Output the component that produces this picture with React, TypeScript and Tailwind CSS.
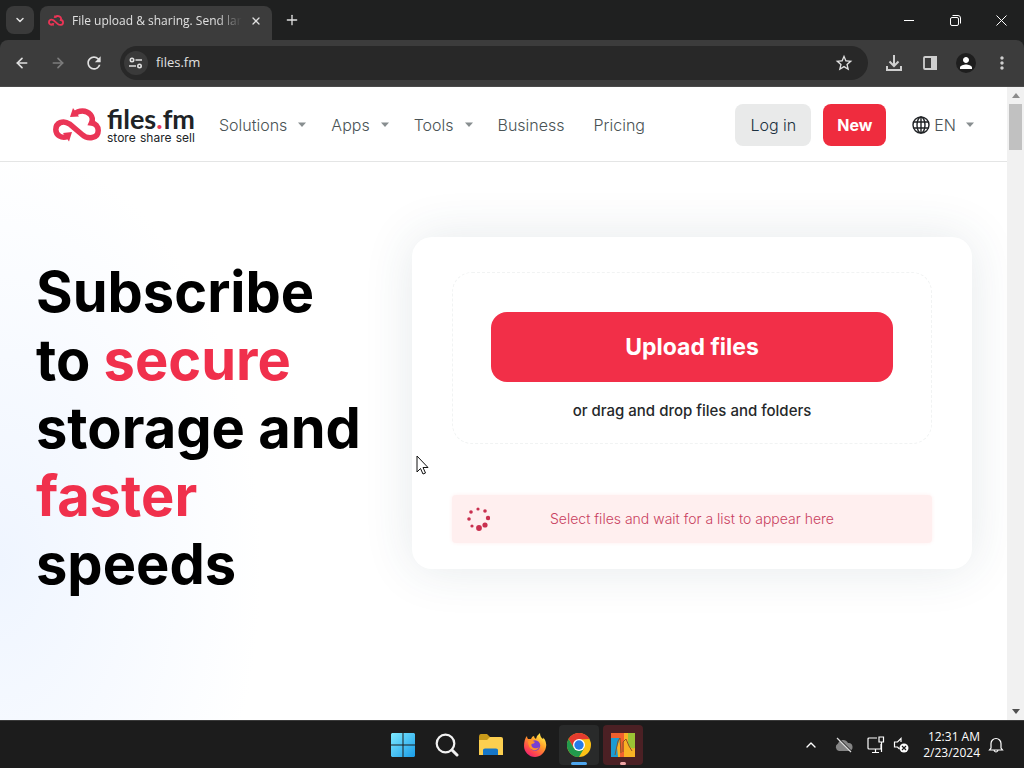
import { useState } from "react";
import { ArrowLeft, ArrowRight, ChevronDown, ChevronUp, Plus, X } from "lucide-react";
import { MdRefresh, MdStarBorder, MdPerson, MdMoreVert } from "react-icons/md";

const navLinks = [
    { name: "Solutions", menu: true },
    { name: "Apps", menu: true },
    { name: "Tools", menu: true },
    { name: "Business", menu: false },
    { name: "Pricing", menu: false },
];

const spinnerDots = [
    { x: 12, y: 2, r: 1.6 },
    { x: 19, y: 4, r: 1.8 },
    { x: 22, y: 11, r: 2.2 },
    { x: 19, y: 18, r: 2.6 },
    { x: 13, y: 21, r: 2.9 },
    { x: 6, y: 19, r: 1.6 },
    { x: 3, y: 12, r: 1.8 },
    { x: 5, y: 5, r: 1.8 },
];

function CloudLogo({ className }: { className: string }) {
    return (
        <svg viewBox="0 0 48 34" className={className} fill="none" aria-hidden="true">
            <path
                d="M14.500 28.500C8.500 31 2.800 27 2.800 21.500C2.800 15 10 11.500 16.500 16L29 26.500C34.500 31.500 45.200 31 45.200 22.500C45.200 18.500 42.500 15.500 38.500 15C41.500 8.500 35.500 3 29.500 3C26 3 23.500 4 21.500 6"
                stroke="#ea3556"
                strokeWidth="5.500"
            />
            <path d="M20 0L17 9L26 8.500Z" fill="#ea3556" />
            <path d="M10 25L19 24L16 33.500Z" fill="#ea3556" />
        </svg>
    );
}

function Caret() {
    return (
        <svg viewBox="0 0 8 5" className="w-2" fill="#888e90" aria-hidden="true">
            <path d="M0 .5H8L4 5Z" />
        </svg>
    );
}

function BrowserChrome() {
    const [url, setUrl] = useState("files.fm");

    return (
        <div className="bg-[#1f2020] text-[#e0e0e0] font-['Open_Sans',sans-serif]">
            <div className="flex h-10 items-end">
                <button aria-label="Search tabs" className="ml-1.5 mb-1.5 flex h-7 w-7 items-center justify-center rounded-lg bg-[#3a3a3a]">
                    <ChevronDown size={12} strokeWidth={3} />
                </button>
                <div className="ml-1.5 flex h-[34px] w-[232px] items-center rounded-t-lg bg-[#3c3c3c] pl-2 pr-1.5 pb-1">
                    <CloudLogo className="w-4" />
                    <span className="ml-2 flex-1 overflow-hidden whitespace-nowrap text-xs mask-r-from-85%">File upload & sharing. Send larg</span>
                    <button aria-label="Close tab" className="ml-1 p-1"><X size={12} strokeWidth={2.5} /></button>
                </div>
                <button aria-label="New tab" className="mb-3 ml-3"><Plus size={16} /></button>
                <div className="ml-auto flex h-10 items-center text-white">
                    <button aria-label="Minimize" className="flex w-[46px] justify-center">
                        <svg width="10" height="10" stroke="currentColor"><path d="M0 5.500H10" /></svg>
                    </button>
                    <button aria-label="Restore" className="flex w-[46px] justify-center">
                        <svg width="11" height="11" fill="none" stroke="currentColor">
                            <rect x=".5" y="2.500" width="8" height="8" rx="1.500" />
                            <path d="M2.500 .5H8Q10.500 .5 10.500 3V8.500" />
                        </svg>
                    </button>
                    <button aria-label="Close" className="flex w-[46px] justify-center">
                        <svg width="11" height="11" stroke="currentColor"><path d="M.5 .5L10.500 10.500M10.500 .5L.5 10.500" /></svg>
                    </button>
                </div>
            </div>
            <div className="flex h-[47px] items-center rounded-t-lg border-b border-[#4a4a4a] bg-[#3c3c3c] px-3.5">
                <button aria-label="Back"><ArrowLeft size={16} strokeWidth={2.5} /></button>
                <button aria-label="Forward" className="ml-5 text-[#7c7c7c]"><ArrowRight size={16} strokeWidth={2.5} /></button>
                <button aria-label="Reload" className="ml-[18px]"><MdRefresh size={20} /></button>
                <div className="ml-4 flex h-[34px] flex-1 items-center rounded-full bg-[#282828] pl-1 pr-3.5">
                    <button aria-label="Site information" className="flex h-6 w-6 items-center justify-center rounded-full bg-[#3a3a3a]">
                        <svg width="14" height="12" fill="none" stroke="currentColor" strokeWidth="1.600">
                            <circle cx="3" cy="3" r="1.700" />
                            <path d="M6.500 3H13M0 9H7" />
                            <circle cx="10.500" cy="9" r="1.700" />
                        </svg>
                    </button>
                    <input aria-label="Address" value={url} onChange={(e) => setUrl(e.target.value)} className="ml-2 min-w-0 flex-1 bg-transparent text-[13px] outline-none" />
                    <button aria-label="Bookmark"><MdStarBorder size={20} /></button>
                </div>
                <div className="ml-4 flex items-center gap-4 text-[#cfcfcf]">
                    <button aria-label="Downloads" className="flex w-5 justify-center">
                        <svg width="18" height="18" fill="none" stroke="currentColor" strokeWidth="2">
                            <path d="M9 1V12M4.500 7.500L9 12L13.500 7.500M2 12V16H16V12" />
                        </svg>
                    </button>
                    <button aria-label="Side panel" className="flex w-5 justify-center">
                        <svg width="14" height="14"><rect x="1" y="1" width="12" height="12" rx="1" fill="none" stroke="currentColor" strokeWidth="1.800" /><path d="M8 0H14V14H8Z" fill="currentColor" /></svg>
                    </button>
                    <button aria-label="Profile" className="flex h-5 w-5 items-center justify-center rounded-full bg-[#1e1e1e] text-white"><MdPerson size={18} /></button>
                    <button aria-label="Menu" className="-mr-0.5"><MdMoreVert size={20} /></button>
                </div>
            </div>
        </div>
    );
}

function SiteHeader() {
    return (
        <header className="flex h-[75px] items-center border-b border-[#e4e5e5] bg-white pl-[53px] pr-[33px] pt-px text-[#4a5355]">
            <a href="#" className="flex items-center">
                <CloudLogo className="w-12" />
                <span className="ml-1.5 flex flex-col text-[#202326]">
                    <span className="text-[27px] font-bold leading-[26px] font-['Lato',sans-serif]">files<span className="text-[#ea3556]">.</span>fm</span>
                    <span className="flex justify-between text-xs leading-3"><span>store</span><span>share</span><span>sell</span></span>
                </span>
            </a>
            <nav className="ml-6 flex items-center gap-[25px] font-light">
                {navLinks.map((link) => (
                    <a key={link.name} href="#" className={link.menu ? "flex items-center gap-[11px]" : "pr-1"}>
                        {link.name}
                        {link.menu && <Caret />}
                    </a>
                ))}
            </nav>
            <div className="ml-auto flex items-center gap-3">
                <button className="h-[42px] rounded-lg bg-[#e9eaea] px-[15px] font-light text-[#1c3140]">Log in</button>
                <button className="h-[42px] rounded-lg bg-[#ef2c3e] px-3.5 font-bold text-white">New</button>
                <button className="ml-3.5 flex items-center font-light">
                    <svg width="18" height="18" fill="none" stroke="#202326" strokeWidth="1.400" className="mr-1">
                        <circle cx="9" cy="9" r="8" />
                        <ellipse cx="9" cy="9" rx="4" ry="8" />
                        <path d="M9 1V17M1.500 6H16.500M1.500 12H16.500" />
                    </svg>
                    EN
                    <span className="ml-2.5"><Caret /></span>
                </button>
            </div>
        </header>
    );
}

function Hero() {
    return (
        <main className="flex flex-1 items-start bg-[radial-gradient(26%_75%_at_0%_72%,#eff5ff_0%,#ffffff_100%)] pl-9 pr-[35px] pt-[75px]">
            <h1 className="mt-[21px] flex-1 whitespace-nowrap text-[56px] font-bold leading-[68px] text-black">
                Subscribe<br />
                to <span className="text-[#f0304c]">secure</span><br />
                storage and<br />
                <span className="text-[#f0304c]">faster</span><br />
                speeds
            </h1>
            <section className="w-3/5 max-w-[560px] rounded-[20px] bg-white px-10 pb-[26px] pt-[35px] shadow-[0_0_50px_rgba(40,70,90,0.12)]">
                <div className="rounded-[20px] border border-dashed border-[#f1f3f3] px-[38px] pb-[21px] pt-[39px] text-center">
                    <button className="h-[70px] w-full rounded-2xl bg-[#f22f48] text-[23px] font-bold text-white">Upload files</button>
                    <p className="mt-[18px] text-[15px] leading-[22px] font-medium text-[#25282a]">or drag and drop files and folders</p>
                </div>
                <div className="mt-[51px] flex h-12 items-center rounded bg-[#ffefef] px-3.5 shadow-[0_0_4px_#ffefef]">
                    <svg width="24" height="24" fill="#c9304f">
                        {spinnerDots.map((dot, i) => <circle key={i} cx={dot.x} cy={dot.y} r={dot.r} />)}
                    </svg>
                    <p className="flex-1 pr-6 text-center text-sm font-light text-[#c93f60]">Select files and wait for a list to appear here</p>
                </div>
            </section>
        </main>
    );
}

function Scrollbar() {
    return (
        <div className="flex w-[17px] flex-col items-center bg-[#f1f1f1] py-1.5" aria-hidden="true">
            <svg width="8" height="5" fill="#8b8b8b"><path d="M0 5L4 0L8 5Z" /></svg>
            <div className="mt-1.5 h-[46px] w-[13px] bg-[#c1c1c1]" />
            <svg width="8" height="5" fill="#505050" className="mt-auto"><path d="M0 0H8L4 5Z" /></svg>
        </div>
    );
}

function Taskbar() {
    return (
        <footer className="flex h-12 items-center border-t border-[#3a3a3a] bg-[#1c1c1c] pl-[22px] text-white font-['Open_Sans',sans-serif]">
            <div className="flex-1" />
            <div className="flex items-center gap-1">
                <button aria-label="Start" className="flex h-10 w-10 items-center justify-center">
                    <svg width="24" height="24" viewBox="0 0 24 24">
                        <defs><linearGradient id="win" x1="0" y1="0" x2="24" y2="24" gradientUnits="userSpaceOnUse"><stop stopColor="#7eeaff" /><stop offset="1" stopColor="#199ce8" /></linearGradient></defs>
                        <path d="M1 0H11.500V11.500H0V1ZM12.500 0H23L24 1V11.500H12.500ZM0 12.500H11.500V24H1L0 23ZM12.500 12.500H24V23L23 24H12.500Z" fill="url(#win)" />
                    </svg>
                </button>
                <button aria-label="Search" className="flex h-10 w-10 items-center justify-center">
                    <svg width="24" height="24" fill="none" stroke="#f2f2f2"><circle cx="10.500" cy="10.500" r="8.800" strokeWidth="2.200" /><path d="M17 17L22 22" strokeWidth="3" strokeLinecap="round" /></svg>
                </button>
                <button aria-label="File Explorer" className="flex h-10 w-10 items-center justify-center">
                    <svg width="24" height="24" viewBox="0 0 24 24"><path d="M0 4Q0 1 2 1H8L11 4V9H0Z" fill="#c99a1a" /><path d="M0 7H8L11 4H22Q24 4 24 6V22H0Z" fill="#fccf50" /><path d="M4 22V17Q4 15.500 6 15.500H17Q19 15.500 19 17V22Z" fill="#1676c7" /></svg>
                </button>
                <button aria-label="Firefox" className="flex h-10 w-10 items-center justify-center">
                    <svg width="24" height="24" viewBox="0 0 24 24">
                        <defs><linearGradient id="fox" x1="20" y1="2" x2="5" y2="23" gradientUnits="userSpaceOnUse"><stop stopColor="#fff04a" /><stop offset=".4" stopColor="#ff9a28" /><stop offset=".8" stopColor="#ff4052" /><stop offset="1" stopColor="#e82078" /></linearGradient></defs>
                        <path d="M4 3Q4 5 5 6L8 6Q9 3 11 3Q11 5 13 6Q14 2 17 0Q17 4 20 6Q21 5 20 4Q24 9 23 14C22 20 17 24 12 24C6 24 1 19 1 13C1 9 2 5 4 3Z" fill="url(#fox)" />
                        <circle cx="12" cy="12.500" r="5.200" fill="#7940d1" />
                        <path d="M5 8Q9 7 12 9Q11 11 8.500 11Q8 14 11 15Q14 16 16 14Q14 18 10 17Q5 15 5 8Z" fill="#ff9428" />
                    </svg>
                </button>
                <button aria-label="Chrome" className="relative flex h-10 w-10 items-center justify-center rounded bg-[#292a2a]">
                    <svg width="24" height="24" viewBox="0 0 24 24">
                        <circle cx="12" cy="12" r="12" fill="#fbc116" />
                        <path d="M1.600 6A12 12 0 0 1 22.400 6L12 6.600L6.800 15Z" fill="#e33b2e" />
                        <path d="M1.600 6A12 12 0 0 0 12 24L17.200 15L6.800 15Z" fill="#229a4c" />
                        <circle cx="12" cy="12" r="6" fill="#fff" />
                        <circle cx="12" cy="12" r="4.700" fill="#267be8" />
                    </svg>
                    <span className="absolute bottom-0 h-[3px] w-4 rounded-full bg-[#4da5ed]" />
                </button>
                <button aria-label="Process monitor" className="relative flex h-10 w-10 items-center justify-center rounded bg-[#4b2024]">
                    <svg width="24" height="24" viewBox="0 0 24 24">
                        <path d="M0 0H24V24H0Z" fill="#f9b124" />
                        <path d="M0 0H13V24H9V5H0Z" fill="#f0602e" />
                        <path d="M0 5H9L6 14L7 24H0Z" fill="#1b9bd2" />
                        <path d="M17 0H24V15Q19 17 17 10Z" fill="#9bc334" />
                        <path d="M4 22L7 8L9 5L10 20M12 19V9L15 6L18 13L21 18" fill="none" stroke="#8a5428" strokeWidth="1" />
                    </svg>
                    <span className="absolute bottom-0 h-[3px] w-1.5 rounded-full bg-[#f0a5a5]" />
                </button>
            </div>
            <div className="flex flex-1 items-center justify-end pr-5">
                <button aria-label="Show hidden icons"><ChevronUp size={16} /></button>
                <svg width="18" height="16" className="ml-4" aria-hidden="true">
                    <path d="M4 14A4 4 0 0 1 3 6.500A5.500 5.500 0 0 1 13 6A4 4 0 0 1 14 14Z" fill="#858585" />
                    <path d="M3 1L17 15" stroke="#1c1c1c" strokeWidth="1.500" /><path d="M2 1L16 15" stroke="#ddd" strokeWidth="1.200" />
                </svg>
                <svg width="18" height="18" className="ml-3.5" fill="none" stroke="currentColor" strokeWidth="1.200" aria-hidden="true">
                    <path d="M10 2H2Q1 2 1 3V12Q1 13 2 13H14V8M5 16.500H12M8.500 13V16M12 1H16.500V6H12ZM14.500 6V16" />
                </svg>
                <svg width="18" height="18" className="ml-2" fill="none" stroke="currentColor" strokeWidth="1.200" aria-hidden="true">
                    <path d="M8 6V2.500L4.500 6H1.500V11H4.500L6.500 13" /><circle cx="11" cy="12" r="4.500" fill="#fff" stroke="none" /><path d="M9 10L13 14M13 10L9 14" stroke="#1c1c1c" />
                </svg>
                <time className="ml-3 text-right text-xs leading-4">12:31 AM<br />2/23/2024</time>
                <button aria-label="Notifications" className="ml-2">
                    <svg width="16" height="16" fill="none" stroke="currentColor" strokeWidth="1.200"><path d="M3 11V6.500A5 5 0 0 1 13 6.500V11L14.500 13H1.500ZM6 13.500Q8 16.500 10 13.500" /></svg>
                </button>
            </div>
        </footer>
    );
}

function App() {
    return (
        <div className="flex min-h-screen flex-col bg-white font-['Inter',sans-serif]">
            <BrowserChrome />
            <div className="flex flex-1">
                <div className="flex min-w-0 flex-1 flex-col">
                    <SiteHeader />
                    <Hero />
                </div>
                <Scrollbar />
            </div>
            <Taskbar />
            <svg width="13" height="20" viewBox="0 0 13 20" className="pointer-events-none absolute left-[416px] top-[455px]" aria-hidden="true">
                <path d="M1 1V17L4.500 13.500L7 19L9.500 18L7 12.500H12Z" fill="#fff" stroke="#111" />
            </svg>
        </div>
    );
}

export default App;
